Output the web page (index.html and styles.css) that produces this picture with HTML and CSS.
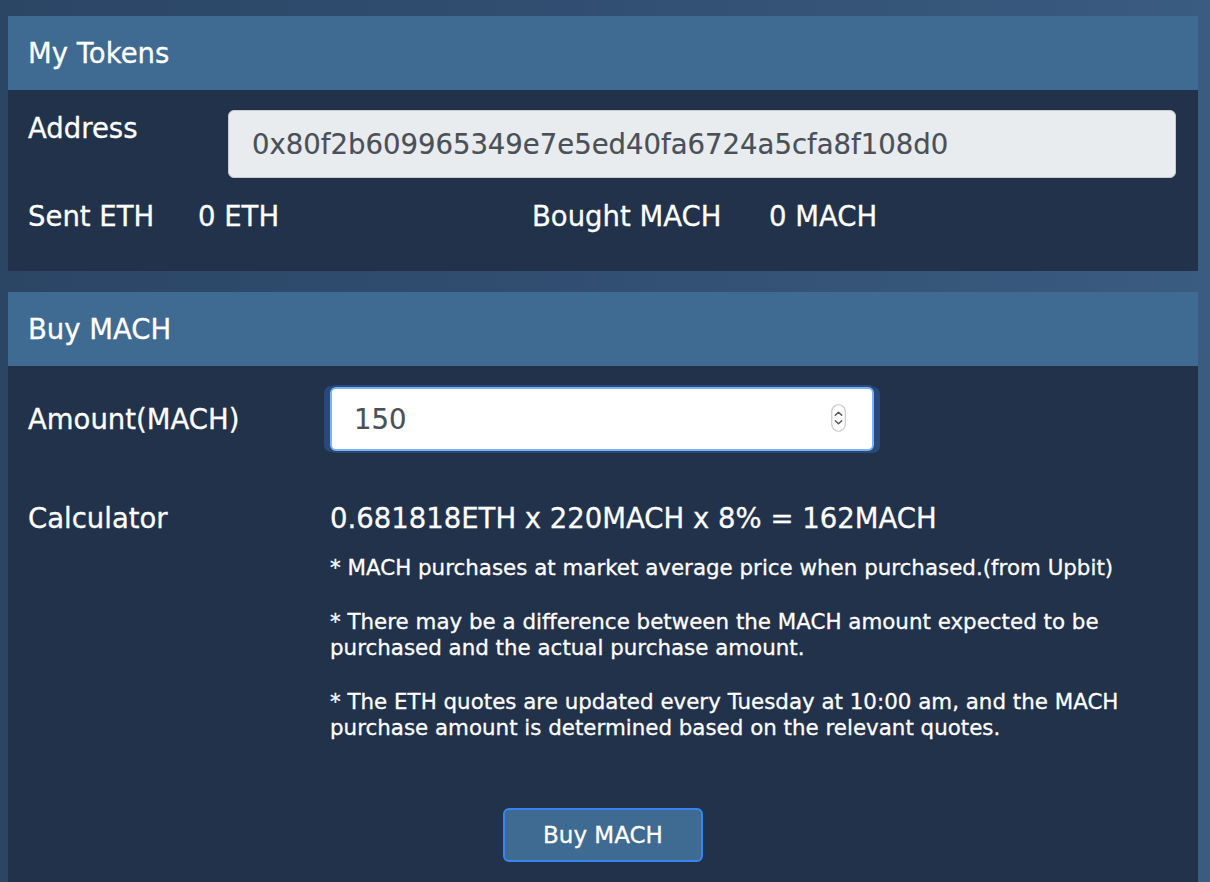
FILE: index.html
```html
<!DOCTYPE html>
<html lang="en">
<head>
<meta charset="utf-8">
<title>My Tokens</title>
<link rel="stylesheet" href="styles.css">
</head>
<body>
<div class="page">
  <section class="card">
    <div class="card-header">My Tokens</div>
    <div class="card-body card-body-tokens">
      <div class="row-address">
        <label class="label" for="addr">Address</label>
        <input id="addr" class="input input-readonly" type="text" value="0x80f2b609965349e7e5ed40fa6724a5cfa8f108d0" readonly>
      </div>
      <div class="row-stats">
        <span>Sent ETH</span>
        <span>0 ETH</span>
        <span>Bought MACH</span>
        <span>0 MACH</span>
      </div>
    </div>
  </section>

  <section class="card card-buy">
    <div class="card-header">Buy MACH</div>
    <div class="card-body card-body-buy">
      <div class="row-amount">
        <label class="label" for="amt">Amount(MACH)</label>
        <div class="amount-wrap">
          <input id="amt" class="input input-focus" type="text" value="150">
          <svg class="spinner" width="15" height="28" viewBox="0 0 15 28" aria-hidden="true">
            <rect x="0.75" y="0.75" width="13.5" height="26.5" rx="6.75" fill="#ffffff" stroke="#c9c9c9" stroke-width="1.2"/>
            <path d="M4.3 11.2 L7.5 8.2 L10.7 11.2" fill="none" stroke="#555" stroke-width="1.5" stroke-linecap="round" stroke-linejoin="round"/>
            <path d="M4.3 16.8 L7.5 19.8 L10.7 16.8" fill="none" stroke="#555" stroke-width="1.5" stroke-linecap="round" stroke-linejoin="round"/>
          </svg>
        </div>
      </div>
      <div class="row-calc">
        <span class="label">Calculator</span>
        <div class="calc">
          <div class="formula">0.681818ETH x 220MACH x 8% = 162MACH</div>
          <div class="notes">
            <p>* MACH purchases at market average price when purchased.(from Upbit)</p>
            <p>* There may be a difference between the MACH amount expected to be purchased and the actual purchase amount.</p>
            <p>* The ETH quotes are updated every Tuesday at 10:00 am, and the MACH purchase amount is determined based on the relevant quotes.</p>
          </div>
        </div>
      </div>
      <div class="btn-row">
        <button class="btn" type="button">Buy MACH</button>
      </div>
    </div>
  </section>
</div>
</body>
</html>
```

FILE: styles.css
```css
html, body {
  margin: 0;
  padding: 0;
}

body {
  height: 882px;
  background: linear-gradient(to right, #2b4565 0%, #314f72 50%, #3a5c80 100%);
  font-family: "DejaVu Sans", "Liberation Sans", sans-serif;
  color: #ffffff;
  overflow: hidden;
  -webkit-text-stroke: 0.3px currentColor;
}

.page {
  padding: 16px 12px 0 8px;
}

.card-buy {
  margin-top: 21px;
}

.card-header {
  height: 74px;
  box-sizing: border-box;
  padding: 0 20px;
  display: flex;
  align-items: center;
  background: #3f6a91;
  font-size: 27.5px;
}

.card-body {
  background: #22324b;
  padding: 20px 22px 37px 20px;
}

.label {
  font-size: 27.5px;
  line-height: 36px;
}

.input {
  box-sizing: border-box;
  width: 100%;
  margin: 0;
  font-family: "DejaVu Sans", "Liberation Sans", sans-serif;
  font-size: 27.5px;
  color: #495057;
  outline: none;
  -webkit-text-stroke: 0.2px currentColor;
}

.row-address {
  display: grid;
  grid-template-columns: 200px 1fr;
  align-items: start;
}

.input-readonly {
  height: 68px;
  padding: 0 0 0 23px;
  background: #e9ecef;
  border: 1px solid #c5cad0;
  border-radius: 6px;
}

.row-stats {
  display: grid;
  grid-template-columns: 170px 334px 237px auto;
  margin-top: 20px;
  font-size: 27.5px;
  line-height: 36px;
}

.card-body-buy {
  padding: 21px 20px 20px 20px;
}

.row-amount {
  display: grid;
  grid-template-columns: 302px 544px;
  align-items: center;
}

.amount-wrap {
  position: relative;
  height: 64px;
}

.input-focus {
  height: 64px;
  padding: 0 0 0 22px;
  background: #ffffff;
  border: 2px solid #7db2f5;
  border-radius: 6px;
  box-shadow: 0 0 0 2px #28497a, -5px 0 0 1px #28497a, 5px 1px 0 1px #28497a;
}

.spinner {
  position: absolute;
  right: 28px;
  top: 17px;
}

.row-calc {
  display: grid;
  grid-template-columns: 302px 1fr;
  margin-top: 49px;
}

.formula {
  font-size: 27.5px;
  line-height: 36px;
}

.notes {
  margin-top: 19px;
  font-size: 21.4px;
  line-height: 26px;
  max-width: 848px;
}

.notes p {
  margin: 0 0 28px 0;
}

.notes p:last-child {
  margin-bottom: 0;
}

.btn-row {
  display: flex;
  justify-content: center;
  margin-top: 67px;
}

.btn {
  width: 200px;
  height: 54px;
  box-sizing: border-box;
  background: #3f6a91;
  border: 2px solid #3585f2;
  border-radius: 6px;
  color: #ffffff;
  font-family: "DejaVu Sans", "Liberation Sans", sans-serif;
  font-size: 23px;
  padding: 0;
  -webkit-text-stroke: 0.3px currentColor;
}
```
